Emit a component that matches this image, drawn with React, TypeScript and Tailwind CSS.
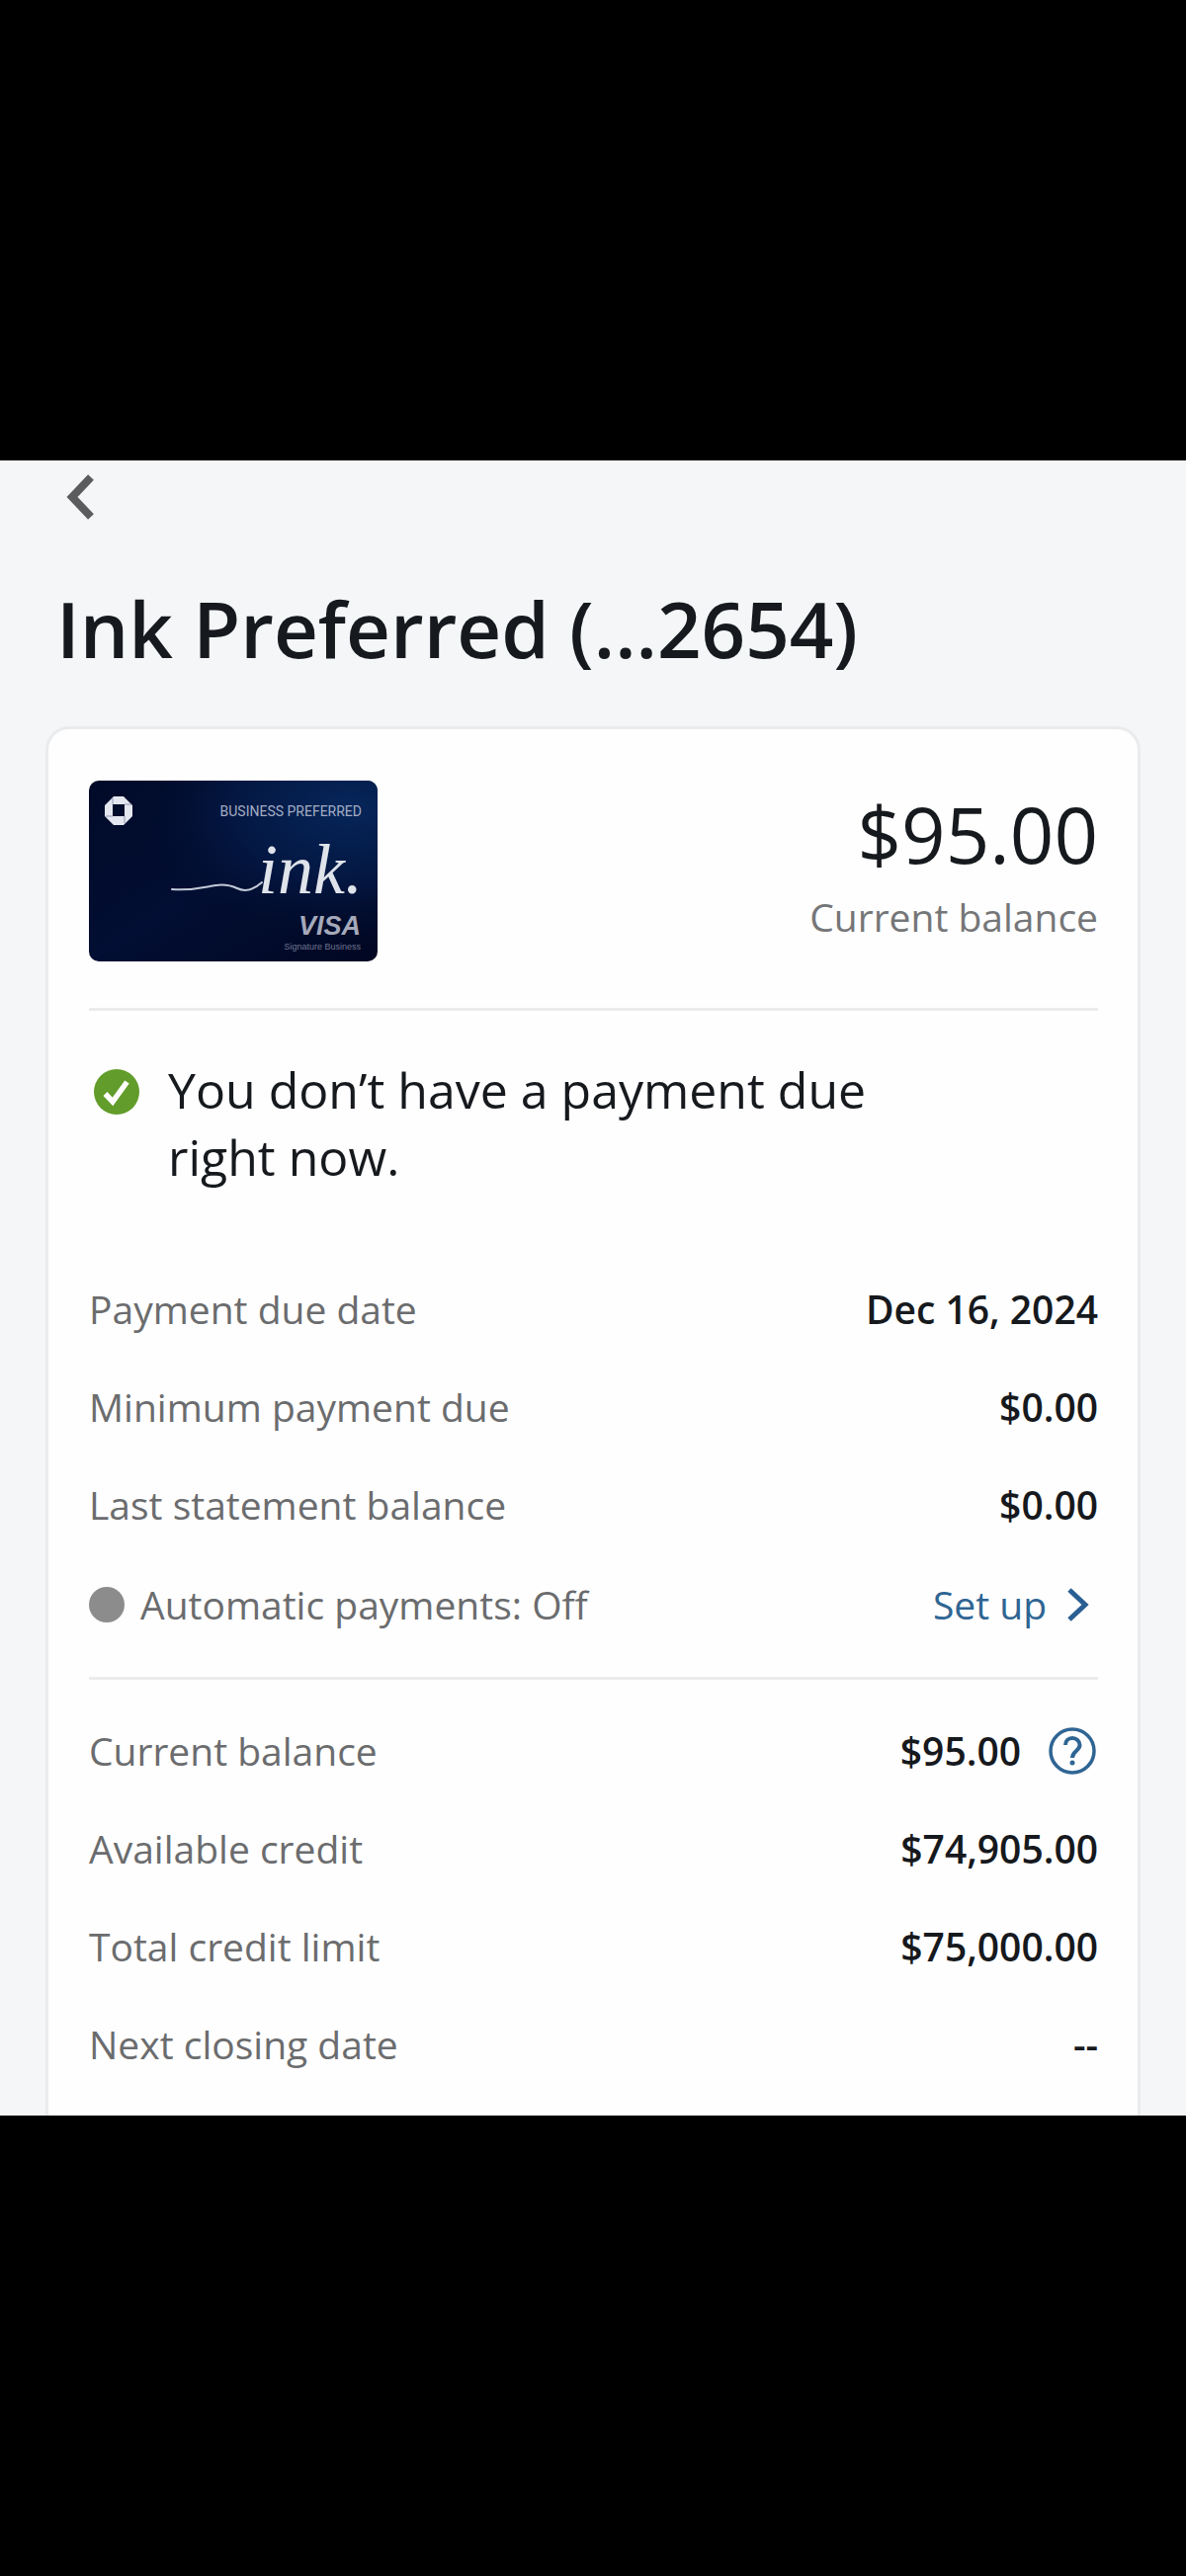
import type { ReactNode } from "react";

const dueRows = [
  { label: "Payment due date", value: "Dec 16, 2024" },
  { label: "Minimum payment due", value: "$0.00" },
  { label: "Last statement balance", value: "$0.00" },
];

const creditRows = [
  { label: "Current balance", value: "$95.00", help: true },
  { label: "Available credit", value: "$74,905.00" },
  { label: "Total credit limit", value: "$75,000.00" },
  { label: "Next closing date", value: "--" },
];

function CardArt() {
  return (
    <svg
      viewBox="0 0 292 183"
      role="img"
      aria-label="Ink Business Preferred card"
      className="w-[292px] h-[183px] shrink-0 rounded-[10px]"
    >
      <defs>
        <linearGradient id="cardBase" x1="0" y1="0" x2="1" y2="1">
          <stop offset="0" stopColor="#010a28" />
          <stop offset="0.5" stopColor="#020e33" />
          <stop offset="1" stopColor="#010722" />
        </linearGradient>
        <radialGradient id="cardGlow" cx="0.9" cy="0.15" r="0.8">
          <stop offset="0" stopColor="#06265a" />
          <stop offset="0.5" stopColor="#041a47" stopOpacity="0.8" />
          <stop offset="1" stopColor="#010a28" stopOpacity="0" />
        </radialGradient>
      </defs>
      <rect width="292" height="183" fill="url(#cardBase)" />
      <rect width="292" height="183" fill="url(#cardGlow)" />

      {/* bank octagon */}
      <path
        d="M25 16h10l9 9v11l-9 9H25l-9-9V25z M24 24v12h12V24z"
        fill="#e4e7f0"
        fillRule="evenodd"
      />
      <path
        d="M24 24v-6M36 24h7M36 36v7M24 36h-7"
        stroke="#8f97b0"
        strokeWidth="1"
      />

      <text
        x="276"
        y="36"
        textAnchor="end"
        fontSize="14"
        fill="#a3adc4"
        className="font-['Roboto',sans-serif]"
      >
        BUSINESS PREFERRED
      </text>

      {/* pen stroke leading into the product name */}
      <path
        d="M84 110c20 1 28-1 38-3 12-3 20-2 28 2 8 4 16 2 25-6"
        fill="none"
        stroke="#c3cad8"
        strokeWidth="2"
        strokeLinecap="round"
      />
      <text
        x="277"
        y="114"
        textAnchor="end"
        fontSize="72"
        fontStyle="italic"
        fill="#dfe3ea"
        className="font-['Liberation_Serif',serif]"
      >
        ink.
      </text>

      <text
        x="275"
        y="156"
        textAnchor="end"
        fontSize="27"
        fontWeight="700"
        fontStyle="italic"
        fill="#a5a9ba"
        className="font-['Liberation_Sans',sans-serif]"
      >
        VISA
      </text>
      <text
        x="275"
        y="171"
        textAnchor="end"
        fontSize="9"
        fill="#6f7590"
        className="font-['Liberation_Sans',sans-serif]"
      >
        Signature Business
      </text>
    </svg>
  );
}

function HelpIcon() {
  return (
    <svg viewBox="0 0 48 48" fill="none" className="size-12" aria-hidden="true">
      <circle cx="24" cy="24" r="22" stroke="#2f6593" strokeWidth="3.500" />
      <path
        d="M17 18c0-4 3-7 7-7s7.500 3 7.500 7c0 6-7.500 6-7.500 13"
        stroke="#2f6593"
        strokeWidth="4"
      />
      <circle cx="24" cy="36" r="2.500" fill="#2f6593" />
    </svg>
  );
}

function Row({ label, children }: { label: string; children: ReactNode }) {
  return (
    <div className="flex items-center justify-between h-[99px]">
      <dt className="text-[#6b6c6e]">{label}</dt>
      <dd className="flex items-center gap-7 font-semibold">{children}</dd>
    </div>
  );
}

export default function App() {
  return (
    <div className="min-h-screen bg-black flex flex-col justify-center font-['Open_Sans',sans-serif] text-[#16191d]">
      <main className="bg-[#f4f6f8] px-[46px]">
        <button type="button" aria-label="Back" className="block mt-[9px] ml-[14px] p-1">
          <svg viewBox="0 0 32 48" fill="none" className="w-8 h-12" aria-hidden="true">
            <path d="M28 4L9 24l19 20" stroke="#5b5c5e" strokeWidth="8" />
          </svg>
        </button>
        <h1 className="mt-[57px] ml-[11px] text-[78px] leading-[96px] font-semibold">
          Ink Preferred (...2654)
        </h1>

        {/* Account card, runs off the bottom edge */}
        <section className="mt-[51px] pl-[41px] pr-10 pt-[52px] pb-[23px] bg-[#fefefe] border-[3px] border-b-0 border-[#e9ebed] rounded-t-[24px] text-[39px] leading-[56px]">
          <div className="flex items-start justify-between pb-[47px]">
            <CardArt />
            <div className="mt-[6px] text-right">
              <p className="text-[78px] leading-[96px]">$95.00</p>
              <p className="mt-2 text-[#757678]">Current balance</p>
            </div>
          </div>

          <div className="flex items-start gap-7 border-t-[3px] border-[#ececed] pt-[46px] pb-[70px]">
            <svg viewBox="0 0 48 48" className="size-12 mt-3 ml-1 shrink-0" aria-hidden="true">
              <circle cx="24" cy="24" r="23" fill="#629c2a" />
              <path d="M12.500 26l7.500 8L34.500 14" fill="none" stroke="#fff" strokeWidth="5.500" />
            </svg>
            <p className="max-w-[760px] text-[50px] leading-[68px]">
              You don’t have a payment due right now.
            </p>
          </div>

          <dl>
            {dueRows.map((row) => (
              <Row key={row.label} label={row.label}>
                {row.value}
              </Row>
            ))}
          </dl>

          <div className="flex items-center justify-between h-[103px]">
            <p className="flex items-center gap-4 text-[#6b6c6e]">
              <span className="size-9 rounded-full bg-[#8c8c8c]" />
              Automatic payments: Off
            </p>
            <a href="#autopay" className="flex items-center gap-5 pr-2 text-[#2f6593]">
              Set up
              <svg viewBox="0 0 24 36" fill="none" className="w-6 h-9" aria-hidden="true">
                <path d="M3 3l16 15L3 33" stroke="#2a5f94" strokeWidth="5" />
              </svg>
            </a>
          </div>

          <dl className="mt-[22px] pt-[22px] border-t-[3px] border-[#ececed]">
            {creditRows.map((row) => (
              <Row key={row.label} label={row.label}>
                {row.value}
                {row.help && (
                  <button type="button" aria-label="About current balance" className="mr-0.5">
                    <HelpIcon />
                  </button>
                )}
              </Row>
            ))}
          </dl>
        </section>
      </main>
    </div>
  );
}
